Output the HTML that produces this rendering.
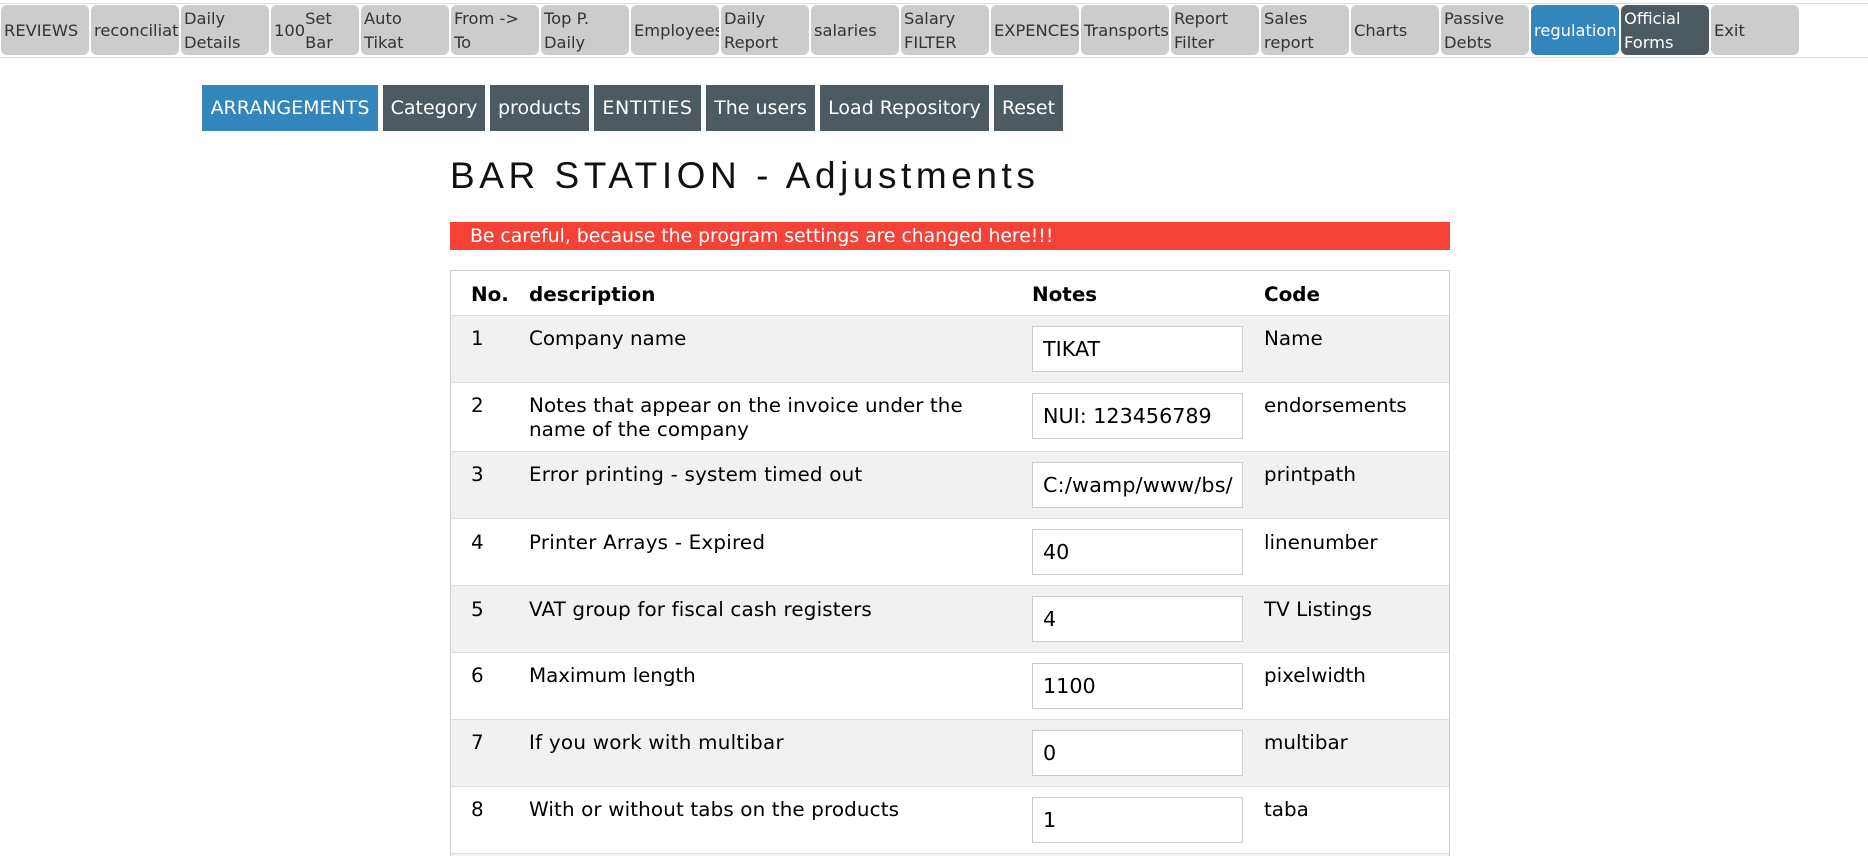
<!DOCTYPE html>
<html lang="en">
<head>
<meta charset="utf-8">
<title>BAR STATION - Adjustments</title>
<style>
html,body{margin:0;padding:0;width:1868px;height:856px;overflow:hidden;background:#fff;color:#000;font-family:"DejaVu Sans",Verdana,sans-serif}
*{box-sizing:border-box}
#wrap{position:relative;width:1868px;height:856px;overflow:hidden}
.abs,.nb,.sb,.row,.c,input{position:absolute}
.line{position:absolute;left:0;width:1868px;height:1px;background:#ddd}
.nb{top:5px;width:88px;height:50px;background:#ccc;color:#333;border-radius:6px;font-size:16.3px;line-height:24px;padding:1px 0 0 3px;overflow:hidden;display:flex;align-items:center;white-space:nowrap}
.nb.blue{background:#3385bb;color:#fff}
.nb.dark{background:#4e5a61;color:#fff}
.sb{top:85px;height:46px;background:#4e5a61;color:#fff;font-size:19px;line-height:47px;text-align:center;white-space:nowrap}
.sb.blue{background:#3385bb}
h1{position:absolute;left:450px;top:152px;margin:0;font-family:"Liberation Sans",sans-serif;font-weight:400;font-size:37px;line-height:48px;letter-spacing:4.55px;white-space:nowrap;color:#111}
.warn{position:absolute;left:450px;top:222px;width:1000px;height:28px;background:#f44336;color:#fff;font-size:18.8px;line-height:29px;padding-left:20px;white-space:nowrap}
.tbl{position:absolute;left:450px;top:270px;width:1000px;height:586px;border:1px solid #ccc;border-bottom:0;background:#fff}
.row{left:451px;width:998px;border-bottom:1px solid #ddd}
.row.alt{background:#f1f1f1}
.c{font-size:19.9px;line-height:24px;white-space:nowrap}
.b{font-weight:700}
input{left:1032px;width:211px;height:46px;border:1px solid #ccc;background:#fff;color:#000;font-family:"DejaVu Sans",Verdana,sans-serif;font-size:20.7px;padding:0 9px 0 10px;margin:0;outline:0}
</style>
</head>
<body>
<div id="wrap">
<div class="line" style="top:3px"></div>
<div class="line" style="top:57px"></div>

<div class="nb" style="left:1px">REVIEWS</div>
<div class="nb" style="left:91px">reconciliation</div>
<div class="nb" style="left:181px">Daily<br>Details</div>
<div class="nb" style="left:271px"><span>100</span><span>Set<br>Bar</span></div>
<div class="nb" style="left:361px">Auto<br>Tikat</div>
<div class="nb" style="left:451px">From -&gt;<br>To</div>
<div class="nb" style="left:541px">Top P.<br>Daily</div>
<div class="nb" style="left:631px">Employees</div>
<div class="nb" style="left:721px">Daily<br>Report</div>
<div class="nb" style="left:811px">salaries</div>
<div class="nb" style="left:901px">Salary<br>FILTER</div>
<div class="nb" style="left:991px;overflow:visible">EXPENCES</div>
<div class="nb" style="left:1081px">Transports</div>
<div class="nb" style="left:1171px">Report<br>Filter</div>
<div class="nb" style="left:1261px">Sales<br>report</div>
<div class="nb" style="left:1351px">Charts</div>
<div class="nb" style="left:1441px">Passive<br>Debts</div>
<div class="nb blue" style="left:1531px">regulation</div>
<div class="nb dark" style="left:1621px">Official<br>Forms</div>
<div class="nb" style="left:1711px">Exit</div>

<div class="sb blue" style="left:202px;width:176px">ARRANGEMENTS</div>
<div class="sb" style="left:383px;width:102px">Category</div>
<div class="sb" style="left:490px;width:99px">products</div>
<div class="sb" style="left:594px;width:107px;letter-spacing:.7px">ENTITIES</div>
<div class="sb" style="left:706px;width:109px">The users</div>
<div class="sb" style="left:820px;width:169px">Load Repository</div>
<div class="sb" style="left:994px;width:69px">Reset</div>

<h1>BAR STATION - Adjustments</h1>
<div class="warn">Be careful, because the program settings are changed here!!!</div>

<div class="tbl"></div>
<div class="row" style="top:271px;height:45px"></div>
<div class="row alt" style="top:316px;height:67px"></div>
<div class="row" style="top:383px;height:69px"></div>
<div class="row alt" style="top:452px;height:67px"></div>
<div class="row" style="top:519px;height:67px"></div>
<div class="row alt" style="top:586px;height:67px"></div>
<div class="row" style="top:653px;height:67px"></div>
<div class="row alt" style="top:720px;height:67px"></div>
<div class="row" style="top:787px;height:67px"></div>
<div class="row alt" style="top:854px;height:2px;border:0"></div>

<div class="c b" style="left:471px;top:283px">No.</div>
<div class="c b" style="left:529px;top:283px">description</div>
<div class="c b" style="left:1032px;top:283px">Notes</div>
<div class="c b" style="left:1264px;top:283px">Code</div>

<div class="c" style="left:471px;top:327px">1</div>
<div class="c" style="left:529px;top:327px">Company name</div>
<input style="top:326px" value="TIKAT">
<div class="c" style="left:1264px;top:327px">Name</div>

<div class="c" style="left:471px;top:394px">2</div>
<div class="c" style="left:529px;top:394px;letter-spacing:.06px">Notes that appear on the invoice under the<br>name of the company</div>
<input style="top:393px" value="NUI: 123456789">
<div class="c" style="left:1264px;top:394px">endorsements</div>

<div class="c" style="left:471px;top:463px">3</div>
<div class="c" style="left:529px;top:463px;letter-spacing:.2px">Error printing - system timed out</div>
<input style="top:462px;letter-spacing:.2px" value="C:/wamp/www/bs/">
<div class="c" style="left:1264px;top:463px">printpath</div>

<div class="c" style="left:471px;top:531px">4</div>
<div class="c" style="left:529px;top:531px;letter-spacing:.2px">Printer Arrays - Expired</div>
<input style="top:529px" value="40">
<div class="c" style="left:1264px;top:531px">linenumber</div>

<div class="c" style="left:471px;top:598px">5</div>
<div class="c" style="left:529px;top:598px;letter-spacing:.14px">VAT group for fiscal cash registers</div>
<input style="top:596px" value="4">
<div class="c" style="left:1264px;top:598px">TV Listings</div>

<div class="c" style="left:471px;top:664px">6</div>
<div class="c" style="left:529px;top:664px;letter-spacing:-.08px">Maximum length</div>
<input style="top:663px" value="1100">
<div class="c" style="left:1264px;top:664px">pixelwidth</div>

<div class="c" style="left:471px;top:731px">7</div>
<div class="c" style="left:529px;top:731px;letter-spacing:.24px">If you work with multibar</div>
<input style="top:730px" value="0">
<div class="c" style="left:1264px;top:731px">multibar</div>

<div class="c" style="left:471px;top:798px">8</div>
<div class="c" style="left:529px;top:798px;letter-spacing:.13px">With or without tabs on the products</div>
<input style="top:797px" value="1">
<div class="c" style="left:1264px;top:798px">taba</div>
</div>
</body>
</html>
